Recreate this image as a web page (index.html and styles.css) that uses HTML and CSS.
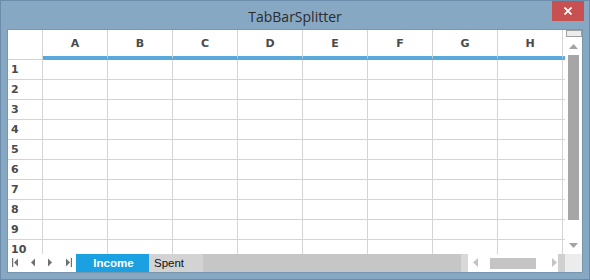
FILE: index.html
```html
<!DOCTYPE html>
<html>
<head>
<meta charset="utf-8">
<link rel="stylesheet" href="styles.css">
</head>
<body>
<div class="window">
  <div class="titlebar">
    <div class="title">TabBarSplitter</div>
    <div class="close"><svg width="8" height="8" viewBox="0 0 8 8"><path d="M0.5 0.5 L7.5 7.5 M7.5 0.5 L0.5 7.5" stroke="#fff" stroke-width="1.8"/></svg></div>
  </div>
  <div class="client">
    <div class="main">
      <div class="sheet">
        <div class="grid">
          <div class="corner"></div>
          <div class="ch">A</div><div class="ch">B</div><div class="ch">C</div><div class="ch">D</div><div class="ch">E</div><div class="ch">F</div><div class="ch">G</div><div class="ch">H</div><div class="ch"></div>
          <div class="rh">1</div><div class="c"></div><div class="c"></div><div class="c"></div><div class="c"></div><div class="c"></div><div class="c"></div><div class="c"></div><div class="c"></div><div class="c"></div>
          <div class="rh">2</div><div class="c"></div><div class="c"></div><div class="c"></div><div class="c"></div><div class="c"></div><div class="c"></div><div class="c"></div><div class="c"></div><div class="c"></div>
          <div class="rh">3</div><div class="c"></div><div class="c"></div><div class="c"></div><div class="c"></div><div class="c"></div><div class="c"></div><div class="c"></div><div class="c"></div><div class="c"></div>
          <div class="rh">4</div><div class="c"></div><div class="c"></div><div class="c"></div><div class="c"></div><div class="c"></div><div class="c"></div><div class="c"></div><div class="c"></div><div class="c"></div>
          <div class="rh">5</div><div class="c"></div><div class="c"></div><div class="c"></div><div class="c"></div><div class="c"></div><div class="c"></div><div class="c"></div><div class="c"></div><div class="c"></div>
          <div class="rh">6</div><div class="c"></div><div class="c"></div><div class="c"></div><div class="c"></div><div class="c"></div><div class="c"></div><div class="c"></div><div class="c"></div><div class="c"></div>
          <div class="rh">7</div><div class="c"></div><div class="c"></div><div class="c"></div><div class="c"></div><div class="c"></div><div class="c"></div><div class="c"></div><div class="c"></div><div class="c"></div>
          <div class="rh">8</div><div class="c"></div><div class="c"></div><div class="c"></div><div class="c"></div><div class="c"></div><div class="c"></div><div class="c"></div><div class="c"></div><div class="c"></div>
          <div class="rh">9</div><div class="c"></div><div class="c"></div><div class="c"></div><div class="c"></div><div class="c"></div><div class="c"></div><div class="c"></div><div class="c"></div><div class="c"></div>
          <div class="rh">10</div><div class="c"></div><div class="c"></div><div class="c"></div><div class="c"></div><div class="c"></div><div class="c"></div><div class="c"></div><div class="c"></div><div class="c"></div>
        </div>
      </div>
      <div class="vscroll">
        <div class="vsplit"></div>
        <svg class="varrow-up" width="9" height="5" viewBox="0 0 9 5"><polygon points="0,5 4.5,0 9,5" fill="#a3a3a3"/></svg>
        <div class="vthumb"></div>
        <svg class="varrow-down" width="9" height="5" viewBox="0 0 9 5"><polygon points="0,0 4.5,5 9,0" fill="#a3a3a3"/></svg>
      </div>
    </div>
    <div class="tabbar">
      <div class="nav">
        <svg width="68" height="18" viewBox="0 0 68 18">
          <rect x="4" y="4" width="1.2" height="9" fill="#707070"/>
          <polygon points="10,4.5 6,8.5 10,12.5" fill="#707070"/>
          <polygon points="27,4.5 23,8.5 27,12.5" fill="#707070"/>
          <polygon points="40,4.5 44,8.5 40,12.5" fill="#707070"/>
          <polygon points="58,4.5 62,8.5 58,12.5" fill="#707070"/>
          <rect x="62.8" y="4" width="1.2" height="9" fill="#707070"/>
        </svg>
      </div>
      <div class="tab active">Income</div>
      <div class="tab">Spent</div>
      <div class="tabfill"></div>
      <div class="splitter"></div>
      <div class="hscroll">
        <svg class="harrow-l" width="5" height="9" viewBox="0 0 5 9"><polygon points="5,0 0,4.5 5,9" fill="#c4c4c4"/></svg>
        <div class="hthumb"></div>
        <svg class="harrow-r" width="5" height="9" viewBox="0 0 5 9"><polygon points="0,0 5,4.5 0,9" fill="#c4c4c4"/></svg>
      </div>
      <div class="strip"></div>
      <div class="sizecorner"></div>
    </div>
  </div>
</div>
</body>
</html>
```
FILE: styles.css
```css
html, body {
  margin: 0;
  padding: 0;
  background: #ffffff;
}
.window {
  width: 590px;
  height: 280px;
  box-sizing: border-box;
  background: #87a8c3;
  border: 1px solid #6c8cab;
  display: flex;
  flex-direction: column;
  overflow: hidden;
}
.titlebar {
  height: 29px;
  display: grid;
  grid-template-columns: 1fr auto 1fr;
  align-items: start;
}
.title {
  grid-column: 2;
  font-family: "Open Sans", "Noto Sans", sans-serif;
  font-size: 14px;
  color: #2b2b2b;
  line-height: 29px;
  margin-top: 1px;
}
.close {
  grid-column: 3;
  justify-self: end;
  margin-right: 5px;
  width: 32px;
  height: 20px;
  background: #c75050;
  display: flex;
  align-items: center;
  justify-content: center;
}
.client {
  margin: 0 7px;
  height: 242px;
  background: #ffffff;
  display: flex;
  flex-direction: column;
  box-shadow: 0 0 0 1px #7896b0;
}
.main {
  height: 224px;
  display: flex;
}
.sheet {
  width: 557px;
  overflow: hidden;
}
.grid {
  display: grid;
  grid-template-columns: 35px repeat(9, 65px);
  grid-template-rows: 30px repeat(10, 20px);
  width: 620px;
}
.grid > div {
  box-sizing: border-box;
  border-right: 1px solid #d4d4d4;
  border-bottom: 1px solid #d4d4d4;
}
.grid > .ch {
  border-bottom: 4px solid #5aa9dd;
  font-family: "DejaVu Sans", Verdana, sans-serif;
  font-weight: bold;
  font-size: 11px;
  color: #4a4a4a;
  display: flex;
  align-items: center;
  justify-content: center;
  padding-top: 1px;
}
.rh {
  font-family: "DejaVu Sans", Verdana, sans-serif;
  font-weight: bold;
  font-size: 11px;
  color: #4a4a4a;
  display: flex;
  align-items: center;
  padding-left: 3px;
  padding-bottom: 1px;
}
.vscroll {
  width: 17px;
  background: #ffffff;
  display: flex;
  flex-direction: column;
  align-items: center;
}
.vsplit {
  width: 16px;
  height: 7px;
  box-sizing: border-box;
  border: 1px solid #a0a0a0;
  background: #ececec;
  align-self: flex-end;
}
.varrow-up {
  margin-top: 7px;
  display: block;
}
.vthumb {
  margin-top: 6px;
  width: 11px;
  height: 165px;
  background: #a6a6a6;
}
.varrow-down {
  margin-top: 23px;
  display: block;
}
.tabbar {
  height: 18px;
  display: flex;
}
.nav {
  width: 68px;
  height: 18px;
  background: #ffffff;
}
.nav svg {
  display: block;
}
.tab {
  font-family: "Liberation Sans", Arial, sans-serif;
  font-size: 11.5px;
  line-height: 18px;
  height: 18px;
  box-sizing: border-box;
}
.tab.active {
  width: 73px;
  background: #1ba1e2;
  color: #ffffff;
  font-weight: bold;
  text-align: center;
  padding-left: 2px;
}
.tab:not(.active) {
  width: 54px;
  background: #d3d3d3;
  color: #111111;
  padding-left: 5px;
}
.tabfill {
  flex: 1;
  background: #c6c6c6;
}
.splitter {
  width: 7px;
  background: #d8d8d8;
}
.hscroll {
  width: 90px;
  background: #ffffff;
  display: flex;
  align-items: center;
}
.harrow-l {
  display: block;
  margin-left: 5px;
  margin-top: -1px;
}
.hthumb {
  margin-left: 12px;
  width: 46px;
  height: 11px;
  background: #c4c4c4;
}
.harrow-r {
  display: block;
  margin-left: 16px;
  margin-top: -1px;
}
.strip {
  width: 7px;
  background: #d0d0d0;
}
.sizecorner {
  width: 17px;
  background: #ececec;
}
```
